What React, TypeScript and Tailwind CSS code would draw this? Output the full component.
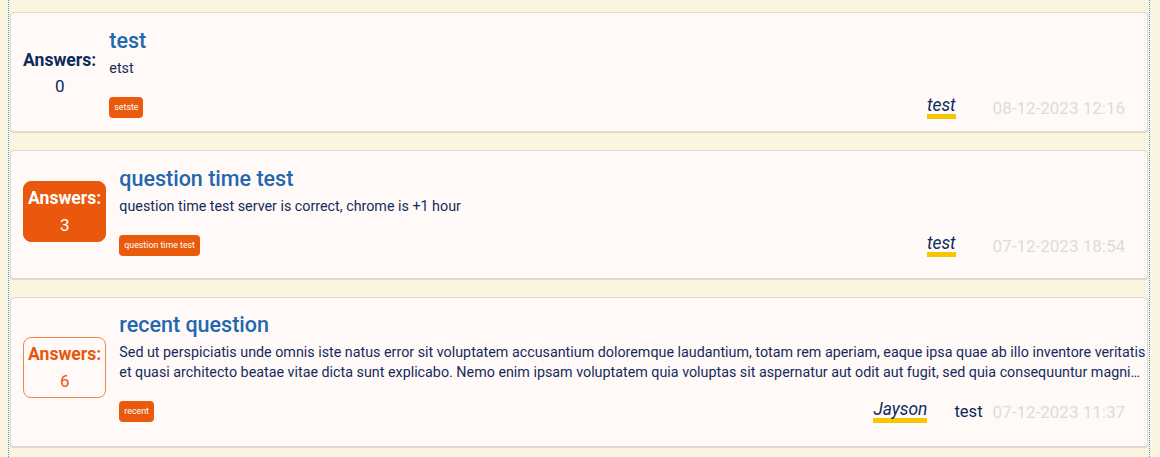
import React from "react";

type Q = {
  answers: number;
  variant: "plain" | "filled" | "outline";
  title: string;
  body: string;
  tag: string;
  author: string;
  editor: string;
  date: string;
  clamp?: boolean;
  pad: string;
};

const questions: Q[] = [
  {
    answers: 0,
    variant: "plain",
    title: "test",
    body: "etst",
    tag: "setste",
    author: "test",
    editor: "",
    date: "08-12-2023 12:16",
    pad: "pt-[14px] pb-[12px]",
  },
  {
    answers: 3,
    variant: "filled",
    title: "question time test",
    body: "question time test server is correct, chrome is +1 hour",
    tag: "question time test",
    author: "test",
    editor: "",
    date: "07-12-2023 18:54",
    pad: "pt-[14px] pb-[21px]",
  },
  {
    answers: 6,
    variant: "outline",
    title: "recent question",
    body: "Sed ut perspiciatis unde omnis iste natus error sit voluptatem accusantium doloremque laudantium, totam rem aperiam, eaque ipsa quae ab illo inventore veritatis et quasi architecto beatae vitae dicta sunt explicabo. Nemo enim ipsam voluptatem quia voluptas sit aspernatur aut odit aut fugit, sed quia consequuntur magni dolores eos qui ratione voluptatem sequi nesciunt.",
    tag: "recent",
    author: "Jayson",
    editor: "test",
    date: "07-12-2023 11:37",
    clamp: true,
    pad: "pt-[13px] pb-[23px]",
  },
];

function AnswersBadge({ q }: { q: Q }) {
  if (q.variant === "plain") {
    return (
      <div className="flex shrink-0 flex-col items-center text-[#0e2a5c]">
        <span className="text-[17.6px] font-bold leading-6">Answers:</span>
        <span className="mt-[2px] text-[17px] leading-6">{q.answers}</span>
      </div>
    );
  }
  const box =
    q.variant === "filled"
      ? "border-[#e9580c] bg-[#e9580c] text-white"
      : "border-[#ef8650] text-[#e8560c]";
  return (
    <div className={`flex shrink-0 flex-col items-center rounded-lg border px-1 py-1 ${box}`}>
      <span className="text-[17.6px] font-bold leading-6">Answers:</span>
      <span className="mt-[3px] text-[17px] leading-6">{q.answers}</span>
    </div>
  );
}

function Card({ q }: { q: Q }) {
  return (
    <div
      className={`flex items-center gap-[13px] rounded-[4px] border border-[#dcd8d2] bg-[#fffaf8] pl-3 shadow-[0_1px_1px_rgba(0,0,0,0.12)] ${q.pad}`}
    >
      <AnswersBadge q={q} />
      <div className="min-w-0 flex-1">
        <h3 className="text-[21.5px] font-medium leading-[28px] text-[#2367af]">{q.title}</h3>
        <p
          className={`mt-[3px] text-[14.3px] leading-[20px] text-[#152a5b] ${q.clamp ? "line-clamp-2" : ""}`}
        >
          {q.body}
        </p>
        <div className="mt-[18px] flex items-center justify-between">
          <span className="h-[21px] rounded-[4px] bg-[#e95a0c] px-[5px] text-[8.8px] leading-[21px] text-white">
            {q.tag}
          </span>
          <div className="mr-[22px] flex items-center leading-[18px]">
            <span className="border-b-[5px] border-[#f6c600] text-[17.4px] italic leading-[18px] text-[#0e2a5c]">
              {q.author}
            </span>
            <span className="ml-[27px] mr-[10px] text-[16.6px] leading-[18px] text-[#0e2a5c]">{q.editor}</span>
            <span className="text-[17px] leading-[18px] text-[#dcdcdc]">{q.date}</span>
          </div>
        </div>
      </div>
    </div>
  );
}

export default function App() {
  return (
    <div className="min-h-[457px] bg-[#fbf4df] font-['Roboto',sans-serif]">
      <div className="ml-[8px] flex min-h-[457px] w-[1142px] flex-col gap-[18px] border-x border-dotted border-[#3d9bf2] px-px pt-3 pb-3">
        {questions.map((q, i) => (
          <Card key={i} q={q} />
        ))}
      </div>
    </div>
  );
}
